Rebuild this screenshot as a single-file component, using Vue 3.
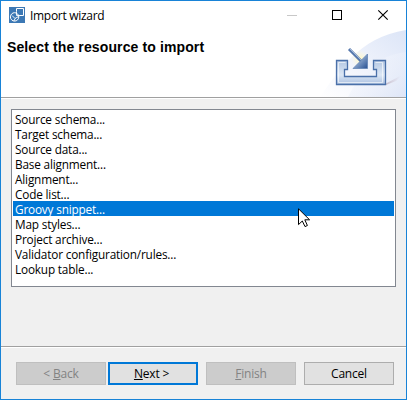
<script setup>
const resources = [
  'Source schema...', 'Target schema...', 'Source data...', 'Base alignment...',
  'Alignment...', 'Code list...', 'Groovy snippet...', 'Map styles...',
  'Project archive...', 'Validator configuration/rules...', 'Lookup table...',
]
const selected = 'Groovy snippet...'
</script>

<template>
  <div class="window">
    <header class="header">
      <div class="titlebar">
        <svg class="app-icon" width="18" height="16" viewBox="0 0 16 16" preserveAspectRatio="none">
          <rect width="16" height="16" fill="#3c78b4" />
          <g fill="none" stroke="#fff">
            <path d="M7.5 4.5V1.5H14.5V8.5H11" />
            <circle cx="5.6" cy="9.9" r="4.2" />
            <path d="M7.5 4.5V8.5H11M3 8.5L6 11.5L9.5 9.5M6 11.5L5 14" stroke-width=".9" />
          </g>
        </svg>
        <span class="title">Import wizard</span>
        <svg class="controls" width="110" height="20" viewBox="0 0 110 20">
          <path d="M4 10.5h10" stroke="#c8c8c8" />
          <rect x="49.5" y="5.5" width="9" height="9" fill="none" stroke="#000" />
          <path d="M95.3 5.3l9.4 9.4M104.7 5.3l-9.4 9.4" stroke="#000" stroke-width="1.15" />
        </svg>
      </div>
      <h1 class="heading">Select the resource to import</h1>
      <svg class="banner" width="86" height="72" viewBox="0 0 86 72">
        <defs>
          <linearGradient id="sweep" x1="0" y1="1" x2="1" y2="0">
            <stop offset="0" stop-color="#fff" />
            <stop offset=".45" stop-color="#f1f4fc" />
            <stop offset="1" stop-color="#dce5f7" />
          </linearGradient>
          <linearGradient id="shine" x1="0" y1="0" x2="1" y2="1">
            <stop offset="0" stop-color="#fff" stop-opacity=".25" />
            <stop offset="1" stop-color="#d9e2f6" stop-opacity=".8" />
          </linearGradient>
          <linearGradient id="tray" x1="0" y1="0" x2="0" y2="1">
            <stop offset="0" stop-color="#b4c7e2" />
            <stop offset=".6" stop-color="#dce7f5" />
            <stop offset="1" stop-color="#a9bfdf" />
          </linearGradient>
          <linearGradient id="head" x1="0" y1="0" x2="1" y2="1">
            <stop offset=".3" stop-color="#a3bbda" />
            <stop offset="1" stop-color="#264f92" />
          </linearGradient>
          <linearGradient id="shade">
            <stop offset="0" stop-color="#b5a6b4" stop-opacity=".8" />
            <stop offset="1" stop-color="#d9d2e2" stop-opacity="0" />
          </linearGradient>
          <radialGradient id="glow">
            <stop offset="0" stop-color="#fff7c2" />
            <stop offset="1" stop-color="#fffbe0" stop-opacity="0" />
          </radialGradient>
        </defs>
        <path d="M0 72C17 48 39 12 86 5V72Z" fill="url(#sweep)" />
        <path d="M28 72C40 48 56 31 86 27V72Z" fill="url(#shine)" />
        <path d="M65 59L82 50L76 56L66 60Z" fill="url(#shade)" />
        <circle cx="40" cy="34" r="9" fill="url(#glow)" />
        <path d="M16.5 35.5H27.5V44.5H24.5V51.5H56.5V44.5H53.5V35.5H65.5V59.5H16.5Z" fill="url(#tray)" stroke="#4a70a9" stroke-width="1.3" />
        <path d="M18.5 57.5V37.5H25.5M62.5 37.5V57.5H18.5M55.5 37.5H62.5" fill="none" stroke="#fff" stroke-opacity=".6" />
        <path d="M29 24L42 37" stroke="#5779ae" stroke-width="3" />
        <path d="M30 24L42 36" stroke="#a3b9d7" stroke-width="1" />
        <path d="M47.5 29V43.5H33Z" fill="url(#head)" stroke="#6585b5" stroke-width=".8" />
      </svg>
    </header>

    <main class="content">
      <ul class="list">
        <li v-for="item in resources" :key="item" :class="{ selected: item === selected }">{{ item }}</li>
      </ul>
    </main>

    <footer class="footer">
      <button class="button" disabled>&lt; <u>B</u>ack</button>
      <button class="button primary"><u>N</u>ext &gt;</button>
      <button class="button finish" disabled><u>F</u>inish</button>
      <button class="button cancel">Cancel</button>
    </footer>

    <svg class="cursor" width="14" height="21" viewBox="0 0 14 21">
      <path d="M.5 .8V16.6L4.3 13L7 18.6L9.4 17.5L6.8 11.8H11.6Z" fill="#fff" stroke="#000" />
    </svg>
  </div>
</template>

<style>
body { margin: 0; }
</style>

<style scoped>
.window {
  position: relative;
  box-sizing: border-box;
  width: 407px;
  height: 400px;
  border: 1px solid #1883d7;
  background: #f0f0f0;
  display: flex;
  flex-direction: column;
  color: #000;
  font-family: "Open Sans", "Noto Sans", sans-serif;
  font-size: 12px;
  overflow: hidden;
}
.header {
  position: relative;
  box-sizing: border-box;
  height: 97px;
  background: #fff;
  border-bottom: 1px solid #a0a0a0;
  box-shadow: 0 1px #fff;
}
.titlebar {
  display: flex;
  align-items: center;
  height: 28px;
  padding: 0 13px 0 8px;
}
.app-icon { display: block; width: 16px; }
.title { margin-left: 5px; padding-top: 2px; line-height: 16px; letter-spacing: -.3px; }
.controls { margin-left: auto; }
.heading {
  margin: 10px 0 0 6px;
  font: bold 14px/17px "Liberation Sans", Arial, sans-serif;
  letter-spacing: .12px;
}
.banner { position: absolute; right: 0; bottom: 0; }
.content { padding: 11px 10px 0; height: 178px; }
.list {
  box-sizing: border-box;
  height: 178px;
  margin: 0;
  padding: 1px;
  list-style: none;
  border: 1px solid #828790;
  background: #fff;
}
.list li {
  height: 15px;
  padding-left: 2px;
  font-size: 11.8px;
  line-height: 17px;
  letter-spacing: -.18px;
  white-space: nowrap;
}
.list .selected { background: #0078d7; color: #fff; }
.footer {
  display: flex;
  margin-top: auto;
  box-sizing: border-box;
  height: 53px;
  padding: 15px 0 0 15px;
  border-top: 1px solid #a0a0a0;
  box-shadow: inset 0 1px #fff;
}
.button {
  box-sizing: border-box;
  width: 90px;
  height: 23px;
  margin: 0 2px 0 0;
  padding: 0;
  border: 1px solid #adadad;
  background: #e1e1e1;
  color: #000;
  font: inherit;
  line-height: 21px;
  letter-spacing: -.2px;
}
.button:disabled { border-color: #bfbfbf; background: #ccc; color: #838383; }
.button.primary { border: 2px solid #0078d7; padding-right: 3px; line-height: 19px; }
.button.finish { margin-left: 6px; }
.button.cancel { margin-left: 6px; }
.cursor { position: absolute; left: 297px; top: 207px; }
</style>
